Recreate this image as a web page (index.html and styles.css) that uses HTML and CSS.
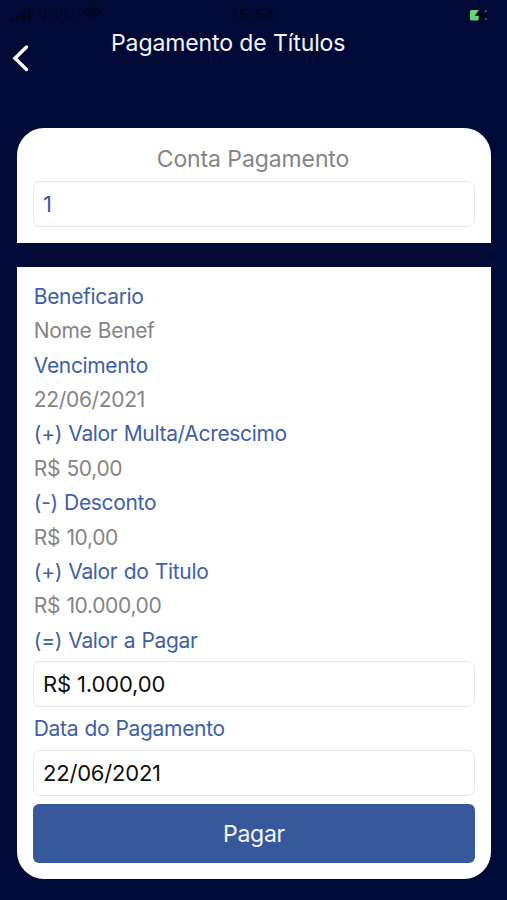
FILE: index.html
```html
<!DOCTYPE html>
<html lang="pt-BR">
<head>
<meta charset="utf-8">
<title>Pagamento de Títulos</title>
<link rel="stylesheet" href="styles.css">
</head>
<body>
<div class="status">
  <div class="carrier">
    <svg width="24" height="15" viewBox="0 0 24 15"><rect x="1" y="10" width="3.5" height="4" rx="1"/><rect x="7" y="7.5" width="3.5" height="6.5" rx="1"/><rect x="13" y="4" width="3.5" height="10" rx="1"/><rect x="19" y="1" width="3.7" height="13" rx="1"/></svg>
    <span>VIVO</span>
    <svg class="wifi" width="20" height="15" viewBox="0 0 20 15"><path d="M0 4.5C5.5-.8 14.500-.8 20 4.500L18 6.600C13.500 2.500 6.500 2.500 2 6.600ZM3.500 8C7.300 4.600 12.700 4.600 16.500 8L14.500 10C12 7.800 8 7.800 5.500 10ZM6.700 11.300C8.600 9.700 11.400 9.700 13.300 11.300L10 14.500Z"/></svg>
  </div>
  <span class="clock">15:54</span>
  <svg class="battery" width="20" height="14" viewBox="0 0 20 14"><path d="M1.500 2H9L5 7.600H9L8.500 12.500H1.500Q0 12.500 0 11V3.500Q0 2 1.500 2Z" fill="#68d17a"/><path d="M15 2.500h1.500v1.500H15zM15 10.500h1.500v1.500H15z" fill="#439052"/><path d="M12.500 0 5 7.800H10L8 14 18 6H12Z" fill="#000414"/></svg>
</div>
<header class="header">
  <svg class="back" width="17" height="28" viewBox="0 0 17 28"><path d="M14.500 3 3 14.200 14.500 25.500" fill="none" stroke="#fff" stroke-width="3.400" stroke-linecap="round"/></svg>
  <h1>Pagamento de Títulos</h1>
</header>
<main>
  <section class="card account">
    <h2>Conta Pagamento</h2>
    <div class="field blue">1</div>
  </section>
  <section class="card details">
    <dl>
      <dt>Beneficario</dt><dd>Nome Benef</dd>
      <dt>Vencimento</dt><dd>22/06/2021</dd>
      <dt>(+) Valor Multa/Acrescimo</dt><dd>R$ 50,00</dd>
      <dt>(-) Desconto</dt><dd>R$ 10,00</dd>
      <dt>(+) Valor do Titulo</dt><dd>R$ 10.000,00</dd>
      <dt>(=) Valor a Pagar</dt>
    </dl>
    <div class="field amount">R$ 1.000,00</div>
    <div class="label">Data do Pagamento</div>
    <div class="field">22/06/2021</div>
    <button class="pay">Pagar</button>
  </section>
</main>
</body>
</html>
```
FILE: styles.css
```css
* { box-sizing: border-box; }
body {
  margin: 0;
  height: 900px;
  overflow: hidden;
  background: #010a37;
  font-family: Inter, "Liberation Sans", sans-serif;
}
.status {
  display: grid;
  grid-template-columns: 1fr auto 1fr;
  align-items: center;
  height: 28px;
  padding: 1px 17px 0 9px;
  color: #000520;
  fill: #000520;
}
.carrier { display: flex; align-items: center; gap: 5px; font-size: 15.5px; letter-spacing: .2px; }
.wifi { margin-left: 1px; }
.clock { font-size: 15px; font-weight: 600; letter-spacing: .8px; padding-left: 8px; }
.battery { justify-self: end; }
.header {
  display: flex;
  height: 99.500px;
}
.back { margin: 15.500px 0 0 12px; }
.header h1 {
  margin: 0 0 0 82px;
  font-size: 23px;
  font-weight: 400;
  line-height: 30px;
  letter-spacing: -.1px;
  color: #f4f5ff;
}
main { display: flex; flex-direction: column; gap: 24px; padding: 0 16px 0 17px; }
.card { background: #fff; padding: 0 16px; }
.account { height: 115.500px; border-radius: 27px 27px 0 0; }
.account h2 {
  margin: 0;
  padding-top: 16px;
  font-size: 23px;
  font-weight: 400;
  line-height: 30px;
  letter-spacing: -.1px;
  text-align: center;
  text-indent: -2px;
  color: #858585;
  margin-bottom: 7.500px;
}
.field {
  height: 46px;
  padding-left: 9px;
  border: 1.500px solid #e9e9e9;
  border-radius: 7px;
  font-size: 22px;
  line-height: 44px;
  letter-spacing: -.2px;
  color: #101010;
}
.blue { color: #365b9c; }
.details { height: 612px; padding-top: 12.700px; border-radius: 0 0 27px 27px; }
dl { margin: 0; }
dt, dd, .label {
  margin: 0;
  padding-left: .8px;
  font-size: 21px;
  line-height: 34.400px;
  letter-spacing: -.33px;
  word-spacing: .7px;
  color: #3f60a6;
}
.amount { margin-top: 3.300px; letter-spacing: -.15px; }
dd { color: #858585; }
.label { margin: 4.500px 0 3.500px; }
.pay {
  display: block;
  width: 100%;
  height: 59px;
  margin-top: 8px;
  border: 0;
  border-radius: 6px;
  background: #37599c;
  color: #f4f7ff;
  font: 400 23px/59px Inter, sans-serif;
  letter-spacing: -.3px;
}
```
